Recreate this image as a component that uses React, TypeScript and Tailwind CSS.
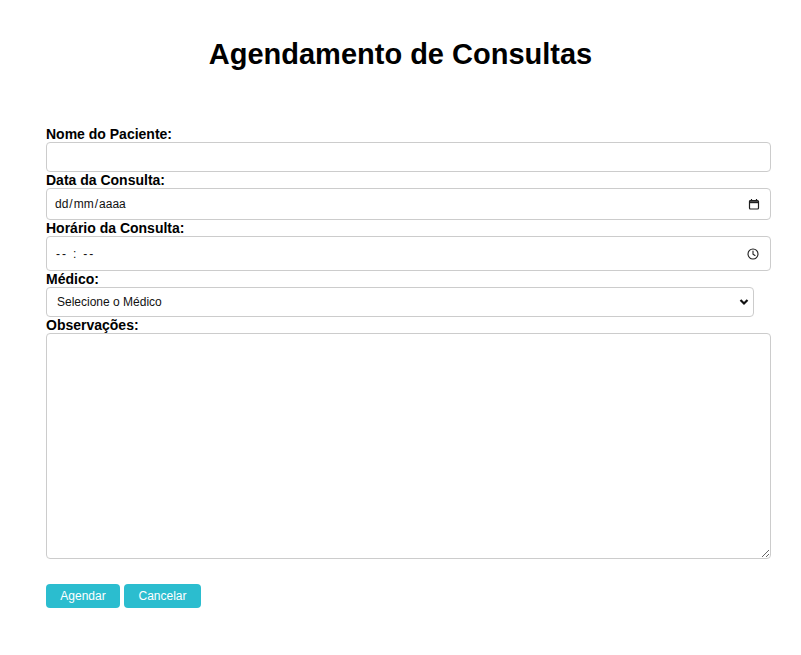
import { useState } from "react";

function CalendarIcon() {
  return (
    <svg width="12" height="12" viewBox="0 0 12 12" fill="none" stroke="#1f1f1f">
      <rect x="1.5" y="2.5" width="9" height="8.5" rx="1" strokeWidth="1.2" />
      <line x1="1.5" y1="4.2" x2="10.5" y2="4.2" strokeWidth="2" />
      <line x1="3.5" y1="1" x2="3.5" y2="2.5" strokeWidth="1.2" />
      <line x1="8.5" y1="1" x2="8.5" y2="2.5" strokeWidth="1.2" />
    </svg>
  );
}

function ClockIcon() {
  return (
    <svg width="12" height="12" viewBox="0 0 12 12" fill="none" stroke="#1f1f1f" strokeWidth="1.1">
      <circle cx="6" cy="6" r="5" />
      <path d="M6 3v3.2l2 1.3" strokeLinecap="round" />
    </svg>
  );
}

function ChevronIcon() {
  return (
    <svg width="10" height="8" viewBox="0 0 10 8" fill="none" stroke="#111" strokeWidth="2.2">
      <path d="M1.5 2l3.5 3.5L8.5 2" />
    </svg>
  );
}

export default function App() {
  const [nome, setNome] = useState("");
  const [obs, setObs] = useState("");

  return (
    <div className="min-h-[655px] bg-white font-['Liberation_Sans',Arial,sans-serif] text-black">
      <h1 className="pt-[38px] text-center text-[29px] leading-[33px] font-bold">
        Agendamento de Consultas
      </h1>

      <form
        className="mt-[55px] flex flex-col pl-[46px] pr-[30px]"
        onSubmit={(e) => e.preventDefault()}
      >
        <label className="block text-sm leading-4 font-bold">Nome do Paciente:</label>
        <input
          value={nome}
          onChange={(e) => setNome(e.target.value)}
          className="h-[30px] w-full rounded border border-[#cccccc] px-2 text-[13px] outline-none"
        />

        <label className="block text-sm leading-4 font-bold">Data da Consulta:</label>
        <div className="flex h-[32px] w-full items-center justify-between rounded border border-[#cccccc] pl-2 pr-[10px]">
          <span className="flex gap-[1px] text-xs text-[#111]">
            <span>dd</span>
            <span>/</span>
            <span>mm</span>
            <span>/</span>
            <span>aaaa</span>
          </span>
          <CalendarIcon />
        </div>

        <label className="block text-sm leading-4 font-bold">Horário da Consulta:</label>
        <div className="flex h-[35px] w-full items-center justify-between rounded border border-[#cccccc] pl-[9px] pr-[11px]">
          <span className="flex gap-[5px] text-xs tracking-[2px] text-[#111]">
            <span>--</span>
            <span>:</span>
            <span>--</span>
          </span>
          <ClockIcon />
        </div>

        <label className="block text-sm leading-4 font-bold">Médico:</label>
        <div className="flex h-[30px] w-[708px] items-center justify-between rounded border border-[#cccccc] pl-[10px] pr-[4px]">
          <span className="text-xs text-[#111]">Selecione o Médico</span>
          <ChevronIcon />
        </div>

        <label className="block text-sm leading-4 font-bold">Observações:</label>
        <textarea
          value={obs}
          onChange={(e) => setObs(e.target.value)}
          className="h-[226px] w-full rounded border border-[#cccccc] p-2 text-[13px] outline-none"
        />

        <div className="mt-[25px] flex gap-1">
          <button
            type="submit"
            className="h-[24px] w-[74px] rounded bg-[#2bbdcf] text-xs text-white"
          >
            Agendar
          </button>
          <button
            type="button"
            className="h-[24px] w-[77px] rounded bg-[#2bbdcf] text-xs text-white"
          >
            Cancelar
          </button>
        </div>
      </form>
    </div>
  );
}
